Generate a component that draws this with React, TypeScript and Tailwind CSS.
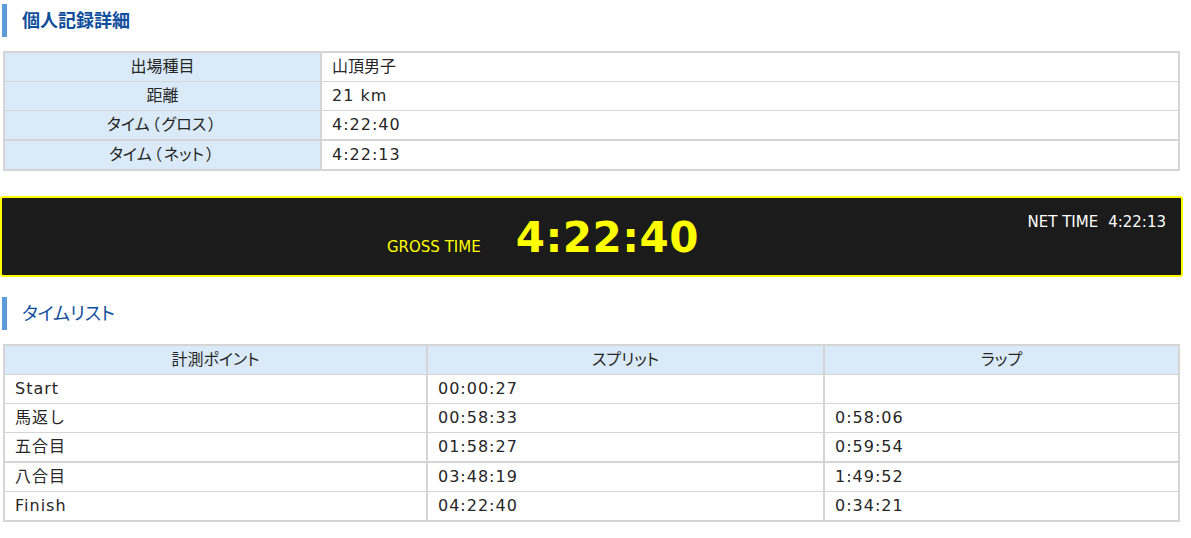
const recordRows = [
  { label: ["出場種目"], value: "山頂男子", latin: false },
  { label: ["距離"], value: "21 km", latin: true },
  { label: ["タイム", "グロス"], value: "4:22:40", latin: true, thick: true },
  { label: ["タイム", "ネット"], value: "4:22:13", latin: true },
];

const splits = [
  { point: "Start", split: "00:00:27", lap: "" },
  { point: "馬返し", split: "00:58:33", lap: "0:58:06" },
  { point: "五合目", split: "01:58:27", lap: "0:59:54", thick: true },
  { point: "八合目", split: "03:48:19", lap: "1:49:52" },
  { point: "Finish", split: "04:22:40", lap: "0:34:21" },
];

function Heading({ children, bold }: { children: string; bold?: boolean }) {
  return (
    <div
      className={`ml-[2px] flex h-[33px] items-center border-l-[5px] border-[#5b9bd8] pl-[15px] text-[18px] text-[#0f4e9d] [font-feature-settings:'palt'] ${
        bold ? "font-bold" : "font-normal"
      }`}
    >
      {children}
    </div>
  );
}

export default function App() {
  return (
    <div className="w-[1191px] min-h-[538px] bg-white pt-[4px] font-['DejaVu_Sans','Noto_Sans_CJK_JP',sans-serif] text-[16px] text-[#262626]">
      {/* 個人記録詳細 */}
      <Heading bold>個人記録詳細</Heading>

      <div className="ml-[3px] mt-[14px] w-[1177px] border-2 border-[#d5d5d5]">
        {recordRows.map((row, i) => (
          <div
            key={row.value}
            className={`flex h-[28px] items-center ${
              i === recordRows.length - 1
                ? ""
                : row.thick
                ? "box-content border-b-2 border-[#d5d5d5]"
                : "box-content border-b border-[#d5d5d5]"
            }`}
          >
            <div className="flex h-full w-[317px] shrink-0 items-center justify-center border-r-2 border-[#d5d5d5] bg-[#dbeaf8] [font-feature-settings:'palt']">
              {row.label[0]}
              {row.label[1] && (
                <>
                  <span className="mx-[2px]">（</span>
                  {row.label[1]}
                  <span className="mx-[2px]">）</span>
                </>
              )}
            </div>
            <div className={`pl-[10px] ${row.latin ? "tracking-[1px]" : ""}`}>
              {row.value}
            </div>
          </div>
        ))}
      </div>

      {/* タイム表示 */}
      <div className="mt-[25px] flex h-[81px] w-[1183px] items-start rounded-[3px] border-2 border-[#ffff00] bg-[#1b1b1b]">
        <div className="ml-[385px] mt-[19px] flex items-baseline">
          <span className="text-[15px] leading-none text-[#ffff00]">
            GROSS TIME
          </span>
          <span className="ml-[35px] text-[42px] font-bold leading-none tracking-[0.5px] text-[#ffff00]">
            4:22:40
          </span>
        </div>
        <div className="ml-auto mr-[15px] mt-[17px] flex text-[15px] leading-none text-white">
          <span>NET TIME</span>
          <span className="ml-[10px]">4:22:13</span>
        </div>
      </div>

      {/* タイムリスト */}
      <div className="mt-[20px]">
        <Heading>タイムリスト</Heading>
      </div>

      <div className="ml-[3px] mt-[14px] w-[1177px] border-2 border-[#d5d5d5]">
        <div className="box-content flex h-[28px] border-b border-[#d5d5d5] bg-[#dbeaf8] [font-feature-settings:'palt']">
          <div className="box-content flex w-[421px] items-center justify-center border-r-2 border-[#d5d5d5]">
            計測ポイント
          </div>
          <div className="box-content flex w-[395px] items-center justify-center border-r-2 border-[#d5d5d5]">
            スプリット
          </div>
          <div className="flex flex-1 items-center justify-center">ラップ</div>
        </div>
        {splits.map((row, i) => (
          <div
            key={row.point}
            className={`flex h-[28px] ${
              i === splits.length - 1
                ? ""
                : row.thick
                ? "box-content border-b-2 border-[#d5d5d5]"
                : "box-content border-b border-[#d5d5d5]"
            }`}
          >
            <div className="box-content flex w-[411px] items-center border-r-2 border-[#d5d5d5] pl-[10px] tracking-[1px]">
              {row.point}
            </div>
            <div className="box-content flex w-[385px] items-center border-r-2 border-[#d5d5d5] pl-[10px] tracking-[1px]">
              {row.split}
            </div>
            <div className="flex flex-1 items-center pl-[10px] tracking-[1px]">
              {row.lap}
            </div>
          </div>
        ))}
      </div>
    </div>
  );
}
